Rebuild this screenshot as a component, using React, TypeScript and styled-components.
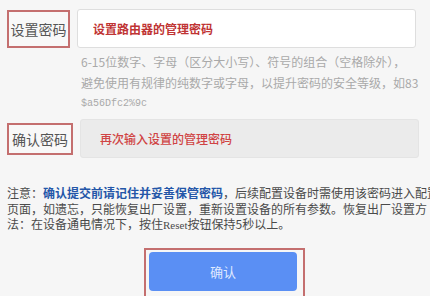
import React from "react";
import styled, { createGlobalStyle } from "styled-components";

const Global = createGlobalStyle`
  html, body { margin: 0; padding: 0; background: #f6f6f6; overflow: hidden; }
  body { font-family: "Noto Sans CJK SC", "Noto Sans", sans-serif; }
  * { box-sizing: border-box; }
`;

const Page = styled.div`
  width: 430px;
  height: 296px;
  overflow: hidden;
  padding: 9px 0 0 7px;
  background: #f6f6f6;
`;

const Row = styled.div<{ $mt?: number }>`
  display: flex;
  align-items: center;
  gap: 7px;
  margin-top: ${(p) => p.$mt ?? 0}px;
`;

const LabelBox = styled.div<{ $w: number; $h: number }>`
  width: ${(p) => p.$w}px;
  height: ${(p) => p.$h}px;
  border: 2px solid #c46f6f;
  display: flex;
  align-items: center;
  justify-content: center;
  font-size: 14px;
  color: #555;
  letter-spacing: 0;
  white-space: nowrap;
  background: #f8f8f8;
`;

const Field = styled.input<{ $filled?: boolean; $pl: number; $weight: number; $red: string }>`
  width: 339px;
  height: 39px;
  border: 1px solid ${(p) => (p.$filled ? "#e4e4e4" : "#dedede")};
  border-radius: 3px;
  background: ${(p) => (p.$filled ? "#ebebeb" : "#ffffff")};
  padding: 0 0 0 ${(p) => p.$pl}px;
  font-family: "Noto Sans CJK SC", "Noto Sans", sans-serif;
  font-size: 12px;
  outline: none;
  &::placeholder {
    color: ${(p) => p.$red};
    font-weight: ${(p) => p.$weight};
    opacity: 1;
  }
`;

const Hint = styled.div`
  margin: 3px 0 0 74px;
  font-size: 12px;
  line-height: 21px;
  color: #a9a9a9;
  white-space: nowrap;
`;

const Mono = styled.div`
  font-family: "Liberation Mono", monospace;
  font-size: 10px;
  line-height: 21px;
  color: #a9a9a9;
`;

const Notice = styled.div`
  margin-top: 27px;
  font-size: 12px;
  line-height: 15.5px;
  color: #4a4a4a;
  white-space: nowrap;
`;

const Strong = styled.span`
  color: #2456a8;
  font-weight: 700;
`;

const Serif = styled.span`
  font-family: "Liberation Serif", serif;
  font-size: 11px;
`;

const ButtonFrame = styled.div`
  margin: 14px 0 0 137px;
  width: 161px;
  height: 52px;
  border: 2px solid #c46f6f;
  padding: 2px 6px 0 3px;
`;

const Submit = styled.button`
  width: 148px;
  height: 39px;
  border: none;
  border-radius: 4px;
  background: #5a8ff4;
  color: #dfe9ff;
  font-family: "Noto Sans CJK SC", "Noto Sans", sans-serif;
  font-size: 13px;
  cursor: pointer;
`;

export default function App() {
  return (
    <>
      <Global />
      <Page>
        <Row>
          <LabelBox $w={63} $h={38}>设置密码</LabelBox>
          <Field
            type="password"
            placeholder="设置路由器的管理密码"
            $pl={15}
            $weight={700}
            $red="#bf3434"
          />
        </Row>
        <Hint>
          6-15位数字、字母（区分大小写）、符号的组合（空格除外），
          <br />
          避免使用有规律的纯数字或字母，以提升密码的安全等级，如83
          <Mono>$a56Dfc2%9c</Mono>
        </Hint>
        <Row $mt={5}>
          <LabelBox $w={66} $h={32}>确认密码</LabelBox>
          <Field
            type="password"
            placeholder="再次输入设置的管理密码"
            $filled
            $pl={19}
            $weight={500}
            $red="#d04444"
          />
        </Row>
        <Notice>
          注意：<Strong>确认提交前请记住并妥善保管密码</Strong>，后续配置设备时需使用该密码进入配置
          <br />
          页面，如遗忘，只能恢复出厂设置，重新设置设备的所有参数。恢复出厂设置方
          <br />
          法：在设备通电情况下，按住<Serif>Reset</Serif>按钮保持5秒以上。
        </Notice>
        <ButtonFrame>
          <Submit>确认</Submit>
        </ButtonFrame>
      </Page>
    </>
  );
}
